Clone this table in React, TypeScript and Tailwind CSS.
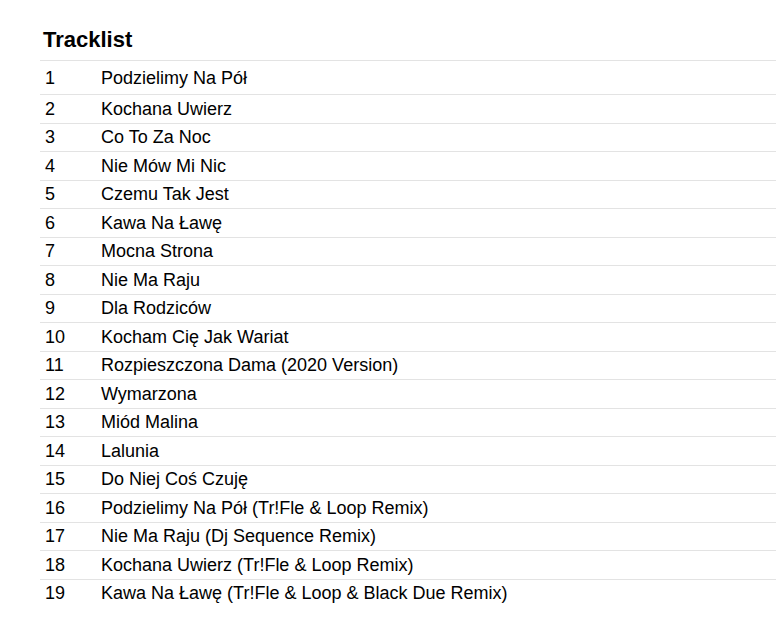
const tracks = [
  "Podzielimy Na Pół",
  "Kochana Uwierz",
  "Co To Za Noc",
  "Nie Mów Mi Nic",
  "Czemu Tak Jest",
  "Kawa Na Ławę",
  "Mocna Strona",
  "Nie Ma Raju",
  "Dla Rodziców",
  "Kocham Cię Jak Wariat",
  "Rozpieszczona Dama (2020 Version)",
  "Wymarzona",
  "Miód Malina",
  "Lalunia",
  "Do Niej Coś Czuję",
  "Podzielimy Na Pół (Tr!Fle & Loop Remix)",
  "Nie Ma Raju (Dj Sequence Remix)",
  "Kochana Uwierz (Tr!Fle & Loop Remix)",
  "Kawa Na Ławę (Tr!Fle & Loop & Black Due Remix)",
];

export default function App() {
  return (
    <div className="min-h-screen bg-white pl-10 text-black" style={{ fontFamily: '"Liberation Sans", Arial, sans-serif' }}>
      <h2 className="pt-[27px] pl-[3px] text-[22px] font-bold leading-[25px] pb-[8px] border-b border-[#e3e3e3]">
        Tracklist
      </h2>
      <div>
        {tracks.map((title, i) => (
          <div
            key={i}
            className={
              "flex text-[18px] leading-[20.5px] " +
              (i === 0 ? "pt-[6.5px] pb-[6px]" : "pt-[3.5px] pb-[3.5px] border-t border-[#e3e3e3]")
            }
          >
            <span className="w-[61px] pl-[5px] shrink-0">{i + 1}</span>
            <span>{title}</span>
          </div>
        ))}
      </div>
    </div>
  );
}
